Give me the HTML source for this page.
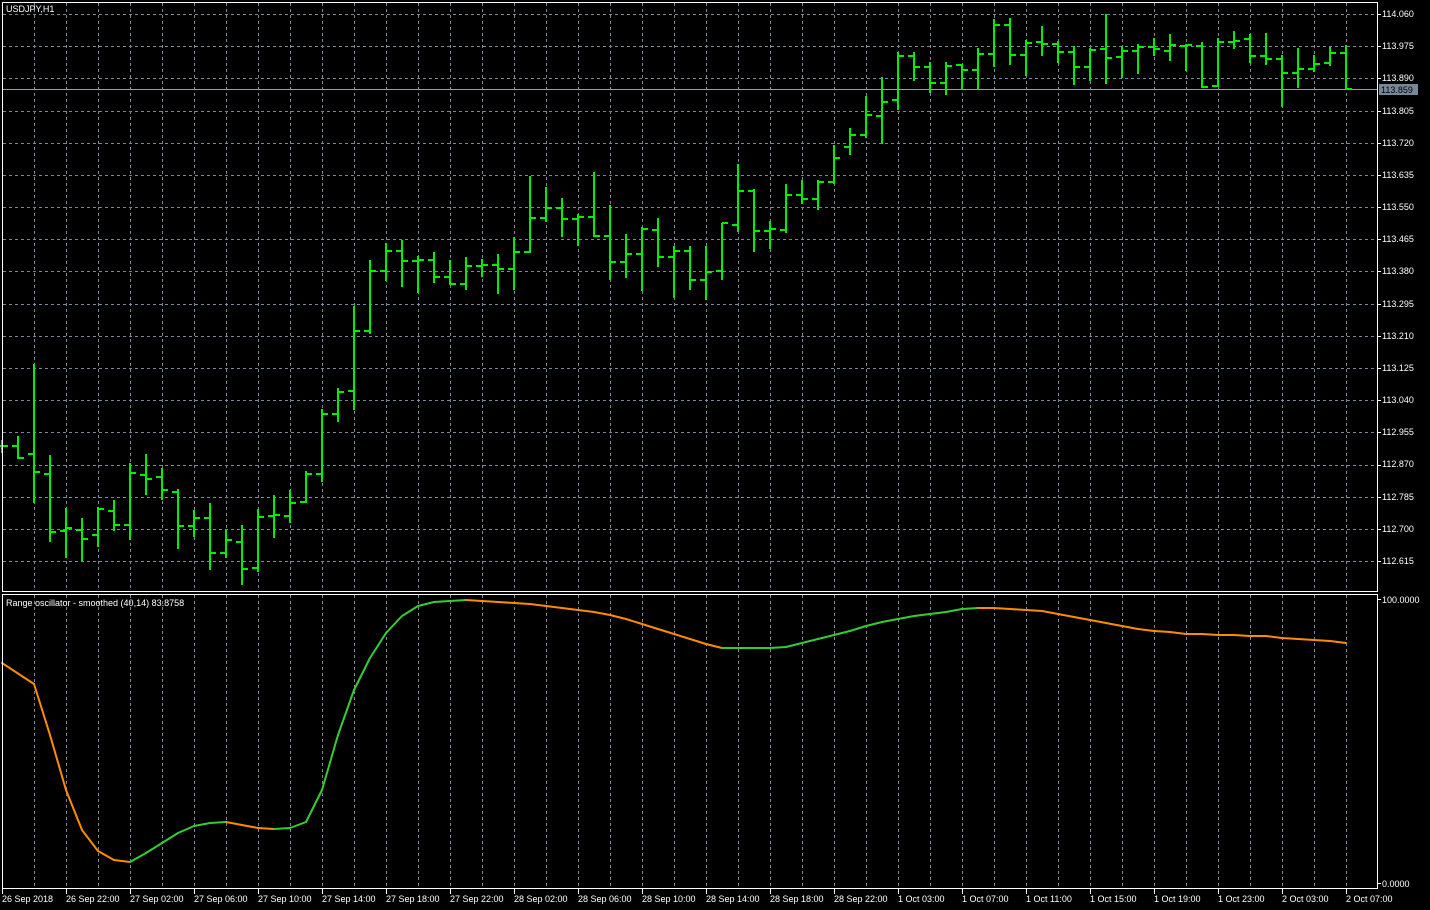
<!DOCTYPE html>
<html><head><meta charset="utf-8"><style>
html,body{margin:0;padding:0;background:#000;width:1430px;height:910px;overflow:hidden}
svg{display:block}
text{font-family:"Liberation Sans","DejaVu Sans",sans-serif;font-size:9px;fill:#fff}
</style></head><body>
<svg id="s" width="1430" height="910" xmlns="http://www.w3.org/2000/svg">
<rect width="1430" height="910" fill="#000"/>
<g id="grid"></g>
<line x1="2" y1="89.5" x2="1377" y2="89.5" stroke="#9a9fa6" stroke-width="1"/>
<g id="bars"></g>
<g id="osc"></g>
<rect x="2.5" y="2.5" width="1375" height="589" fill="none" stroke="#fff" stroke-width="1"/>
<rect x="2.5" y="594.5" width="1375" height="294" fill="none" stroke="#fff" stroke-width="1"/>
<g id="axis"></g>
<text x="6" y="12">USDJPY,H1</text>
<text x="6" y="606">Range oscillator - smoothed (40,14) 83.8758</text>
<rect x="1379" y="84" width="39" height="11" fill="#778899"/>
<text x="1381" y="93" style="fill:#000">113.859</text>
<text x="1382" y="603">100.0000</text>
<text x="1382" y="887">0.0000</text>
<g id="tl">
<text x="2" y="902">26 Sep 2018</text>
<text x="66" y="902">26 Sep 22:00</text>
<text x="130" y="902">27 Sep 02:00</text>
<text x="194" y="902">27 Sep 06:00</text>
<text x="258" y="902">27 Sep 10:00</text>
<text x="322" y="902">27 Sep 14:00</text>
<text x="386" y="902">27 Sep 18:00</text>
<text x="450" y="902">27 Sep 22:00</text>
<text x="514" y="902">28 Sep 02:00</text>
<text x="578" y="902">28 Sep 06:00</text>
<text x="642" y="902">28 Sep 10:00</text>
<text x="706" y="902">28 Sep 14:00</text>
<text x="770" y="902">28 Sep 18:00</text>
<text x="834" y="902">28 Sep 22:00</text>
<text x="898" y="902">1 Oct 03:00</text>
<text x="962" y="902">1 Oct 07:00</text>
<text x="1026" y="902">1 Oct 11:00</text>
<text x="1090" y="902">1 Oct 15:00</text>
<text x="1154" y="902">1 Oct 19:00</text>
<text x="1218" y="902">1 Oct 23:00</text>
<text x="1282" y="902">2 Oct 03:00</text>
<text x="1346" y="902">2 Oct 07:00</text>
</g>
<g id="pl">
<text x="1382" y="17">114.060</text>
<text x="1382" y="49">113.975</text>
<text x="1382" y="81">113.890</text>
<text x="1382" y="114">113.805</text>
<text x="1382" y="146">113.720</text>
<text x="1382" y="178">113.635</text>
<text x="1382" y="210">113.550</text>
<text x="1382" y="242">113.465</text>
<text x="1382" y="274">113.380</text>
<text x="1382" y="307">113.295</text>
<text x="1382" y="339">113.210</text>
<text x="1382" y="371">113.125</text>
<text x="1382" y="403">113.040</text>
<text x="1382" y="435">112.955</text>
<text x="1382" y="467">112.870</text>
<text x="1382" y="500">112.785</text>
<text x="1382" y="532">112.700</text>
<text x="1382" y="564">112.615</text>
</g>
</svg>
<script>
var NS="http://www.w3.org/2000/svg";
function el(p,t,a){var e=document.createElementNS(NS,t);for(var k in a)e.setAttribute(k,a[k]);p.appendChild(e);return e;}
var g=document.getElementById('grid'),ax=document.getElementById('axis');
for(var x=34;x<1377;x+=32){
 el(g,'line',{x1:x+.5,y1:3,x2:x+.5,y2:591,stroke:'#778899','stroke-dasharray':'3,3'});
 el(g,'line',{x1:x+.5,y1:595,x2:x+.5,y2:888,stroke:'#778899','stroke-dasharray':'3,3'});
}
for(var i=0;i<18;i++){var y=Math.round(14+32.18*i)+.5;
 el(g,'line',{x1:3,y1:y,x2:1377,y2:y,stroke:'#778899','stroke-dasharray':'3,3'});
 el(ax,'line',{x1:1377,y1:y,x2:1381,y2:y,stroke:'#fff'});}
el(ax,'line',{x1:1377,y1:599.5,x2:1381,y2:599.5,stroke:'#fff'});
el(ax,'line',{x1:1377,y1:883.5,x2:1381,y2:883.5,stroke:'#fff'});
for(var j=0;j<22;j++){var x=2+64*j+.5;el(ax,'line',{x1:x,y1:889,x2:x,y2:894,stroke:'#fff'});}
// bars: H,L,O,C
var B=[[440,452,446,446],[436,458,446,458],[364,502,454,472],[455,541,474,532],[508,557,531,528],[518,560,530,539],[507,546,535,509],[500,530,511,525],[463,539,525,473],[454,494,475,479],[468,499,477,490],[489,548,492,526],[510,536,526,518],[503,569,518,553],[530,557,553,540],[525,584,542,569],[509,571,568,517],[495,537,516,515],[490,522,516,503],[471,502,502,474],[409,481,474,414],[388,421,414,392],[306,409,391,331],[260,333,331,271],[243,280,271,251],[240,286,251,261],[256,292,261,260],[252,282,260,277],[260,284,277,284],[257,289,284,266],[259,276,266,265],[254,293,265,269],[237,289,269,252],[176,252,252,218],[187,221,218,208],[198,236,208,219],[214,245,219,217],[172,236,217,236],[205,279,236,262],[234,277,262,254],[227,290,254,229],[218,266,230,257],[246,297,257,251],[246,289,251,280],[246,299,280,272],[223,279,271,223],[164,231,225,191],[189,251,191,231],[221,248,231,229],[184,232,230,195],[180,203,195,199],[180,209,199,182],[145,183,182,158],[128,154,147,135],[96,137,135,115],[77,143,116,102],[52,109,100,56],[52,80,56,67],[62,92,67,83],[62,94,83,66],[64,89,65,70],[48,89,70,54],[19,66,54,25],[18,64,25,55],[40,75,55,43],[26,55,42,44],[41,62,44,52],[46,84,52,67],[48,80,67,50],[14,83,49,58],[46,77,57,51],[44,73,51,47],[38,55,47,49],[34,60,51,45],[44,70,46,45],[42,87,46,87],[38,86,86,42],[31,48,42,41],[34,62,39,56],[33,64,56,59],[55,106,59,73],[48,87,73,69],[55,71,69,64],[47,65,63,53],[45,89,53,89]];
var bg=document.getElementById('bars'),c='#00ee00',d='';
B.forEach(function(b,k){var x=2+16*k;
 d+='M'+x+' '+b[0]+'V'+(b[1]+1)+'M'+(x-6)+' '+b[2]+'H'+x+'M'+x+' '+b[3]+'H'+(x+6);});
el(bg,'path',{d:d,stroke:c,'stroke-width':2,fill:'none'});
var P=[[2,663],[34,684],[50,735],[66,790],[82,830],[98,851],[114,860],[130,862],[146,853],[162,843],[178,833],[194,826],[210,823],[226,822],[242,825],[258,828],[274,829],[290,828],[306,822],[322,790],[338,735],[354,690],[370,658],[386,633],[402,616],[418,606],[434,602],[450,601],[466,600],[482,601],[498,602],[514,603],[530,604],[546,606],[562,608],[578,610],[594,612],[610,615],[626,619],[642,624],[658,629],[674,634],[690,639],[706,644],[722,648],[738,648],[754,648],[770,648],[786,647],[802,643],[818,639],[834,635],[850,631],[866,626],[882,622],[898,619],[914,616],[930,614],[946,612],[962,609],[978,608],[994,608],[1010,609],[1026,610],[1042,611],[1058,614],[1074,617],[1090,620],[1106,623],[1122,626],[1138,629],[1154,631],[1170,632],[1186,634],[1202,634],[1218,635],[1234,635],[1250,636],[1266,636],[1282,638],[1298,639],[1314,640],[1330,641],[1346,643]];
var og=document.getElementById('osc');
for(var i=1;i<P.length;i++){var col=(P[i][1]<P[i-1][1]||(P[i][1]==P[i-1][1]&&P[i][0]>=738&&P[i][0]<=770))?'#32cd32':'#ff8c00';
 if(P[i][0]>=738&&P[i][0]<=770)col='#32cd32';
 el(og,'line',{x1:P[i-1][0],y1:P[i-1][1],x2:P[i][0],y2:P[i][1],stroke:col,'stroke-width':2,'stroke-linecap':'round'});}
</script>
</body></html>
